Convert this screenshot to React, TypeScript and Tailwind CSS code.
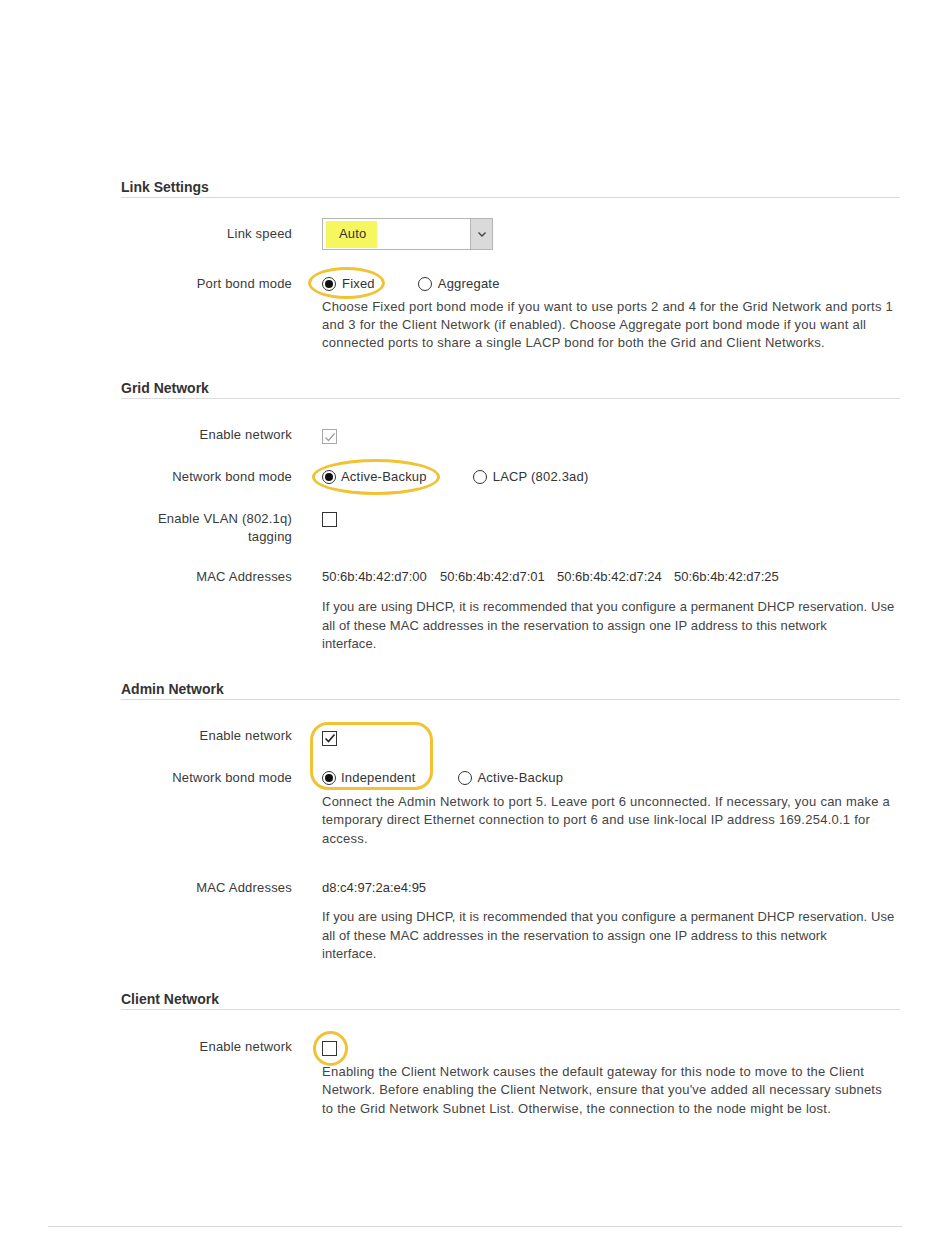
import React from "react";

const Radio = ({ checked }: { checked?: boolean }) => (
  <span className="relative inline-flex h-[14px] w-[14px] shrink-0 items-center justify-center rounded-full border border-[#333] bg-white">
    {checked && <span className="h-[8px] w-[8px] rounded-full bg-[#111]" />}
  </span>
);

const Checkbox = ({ checked, disabled }: { checked?: boolean; disabled?: boolean }) => (
  <span
    className={
      disabled
        ? "inline-flex h-[15px] w-[15px] shrink-0 items-center justify-center border border-[#a8a8a8] bg-white"
        : "inline-flex h-[15px] w-[15px] shrink-0 items-center justify-center border border-[#333] bg-white"
    }
  >
    {checked && (
      <svg width="12" height="12" viewBox="0 0 12 12">
        <path
          d="M1.5 6.5 L4.5 9.5 L10.5 2.5"
          fill="none"
          stroke={disabled ? "#9a9a9a" : "#222"}
          strokeWidth={disabled ? 1.2 : 1.6}
        />
      </svg>
    )}
  </span>
);

const Header = ({ children, mt }: { children: React.ReactNode; mt: string }) => (
  <div className={`${mt} border-b border-[#dcdcdc] pb-[2px] text-[14px] font-bold leading-[16px] text-[#333]`}>{children}</div>
);

const Label = ({ children }: { children: React.ReactNode }) => (
  <div className="w-[171px] shrink-0 text-right text-[13px] leading-[18px] tracking-[0.2px] text-[#3a3a3a]">{children}</div>
);

const Desc = ({
  lines,
  mt,
  leading = "leading-[18.5px]",
  tracking = "tracking-[0.25px]",
}: {
  lines: string[];
  mt: string;
  leading?: string;
  tracking?: string;
}) => (
  <div className={`${mt} ml-[201px] text-[13px] ${leading} ${tracking} text-[#444]`}>
    {lines.map((l, i) => (
      <div key={i} className="whitespace-nowrap">
        {l}
      </div>
    ))}
  </div>
);

const dhcp = [
  "If you are using DHCP, it is recommended that you configure a permanent DHCP reservation. Use",
  "all of these MAC addresses in the reservation to assign one IP address to this network",
  "interface.",
];

export default function App() {
  return (
    <div
      className="min-h-[1248px] w-[950px] bg-white pb-[19px] text-[#333]"
      style={{ fontFamily: '"Liberation Sans", Arial, sans-serif' }}
    >
      <div className="ml-[121px] w-[779px] pt-[179px]">
        {/* Link Settings */}
        <Header mt="mt-0">Link Settings</Header>

        <div className="mt-[20px] flex h-[32px] items-center">
          <Label>Link speed</Label>
          <div className="ml-[30px] flex h-[32px] w-[171px] items-stretch border border-[#b5b5b5] bg-white">
            <div className="flex flex-1 items-center pl-[3px]">
              <div className="flex h-[27px] w-[51px] items-center bg-[#f6f75e] pl-[13px] text-[13px] tracking-[0.2px] text-[#333]">Auto</div>
            </div>
            <div className="flex w-[22px] items-center justify-center border-l border-[#b5b5b5] bg-[#dadada]">
              <svg width="10" height="7" viewBox="0 0 10 7">
                <path d="M1.5 1.5 L5 5 L8.5 1.5" fill="none" stroke="#444" strokeWidth="1.4" />
              </svg>
            </div>
          </div>
        </div>

        <div className="mt-[25px] flex h-[18px] items-center">
          <Label>Port bond mode</Label>
          <div className="relative ml-[30px] flex items-center text-[13px] tracking-[0.2px] text-[#333]">
            <span className="pointer-events-none absolute left-[-14px] top-[-7px] h-[32px] w-[77px] rounded-[50%] border-[3px] border-[#f1c232]" />
            <Radio checked />
            <span className="ml-[6px]">Fixed</span>
            <span className="ml-[43px] flex">
              <Radio />
            </span>
            <span className="ml-[6px]">Aggregate</span>
          </div>
        </div>

        <Desc
          mt="mt-[5px]"
          leading="leading-[18px]"
          lines={[
            "Choose Fixed port bond mode if you want to use ports 2 and 4 for the Grid Network and ports 1",
            "and 3 for the Client Network (if enabled). Choose Aggregate port bond mode if you want all",
            "connected ports to share a single LACP bond for both the Grid and Client Networks.",
          ]}
        />

        {/* Grid Network */}
        <Header mt="mt-[28px]">Grid Network</Header>

        <div className="mt-[27px] flex h-[18px] items-start">
          <Label>Enable network</Label>
          <div className="ml-[30px] mt-[3px] flex">
            <Checkbox checked disabled />
          </div>
        </div>

        <div className="mt-[24px] flex h-[18px] items-center">
          <Label>Network bond mode</Label>
          <div className="relative ml-[30px] flex items-center text-[13px] tracking-[0.2px] text-[#333]">
            <span className="pointer-events-none absolute left-[-10px] top-[-8px] h-[36px] w-[128px] rounded-[50%] border-[3px] border-[#f1c232]" />
            <Radio checked />
            <span className="ml-[5px]">Active-Backup</span>
            <span className="ml-[46px] flex">
              <Radio />
            </span>
            <span className="ml-[6px]">LACP (802.3ad)</span>
          </div>
        </div>

        <div className="mt-[24px] flex items-start">
          <Label>
            Enable VLAN (802.1q)
            <br />
            tagging
          </Label>
          <div className="ml-[30px] mt-[2px] flex">
            <Checkbox />
          </div>
        </div>

        <div className="mt-[22px] flex h-[18px] items-center">
          <Label>MAC Addresses</Label>
          <div className="ml-[30px] flex text-[13px] text-[#333]">
            <span className="w-[118px]">50:6b:4b:42:d7:00</span>
            <span className="w-[117px]">50:6b:4b:42:d7:01</span>
            <span className="w-[117px]">50:6b:4b:42:d7:24</span>
            <span>50:6b:4b:42:d7:25</span>
          </div>
        </div>

        <Desc mt="mt-[12px]" tracking="tracking-[0.1px]" lines={dhcp} />

        {/* Admin Network */}
        <Header mt="mt-[27px]">Admin Network</Header>

        <div className="relative">
          <div className="mt-[27px] flex h-[18px] items-start">
            <Label>Enable network</Label>
            <div className="relative ml-[30px] mt-[4px] flex">
              <span className="pointer-events-none absolute left-[-12px] top-[-9px] h-[68px] w-[123px] rounded-[18px] border-[3px] border-[#f1c232]" />
              <Checkbox checked />
            </div>
          </div>

          <div className="mt-[24px] flex h-[18px] items-center">
            <Label>Network bond mode</Label>
            <div className="ml-[30px] flex items-center text-[13px] tracking-[0.2px] text-[#333]">
              <Radio checked />
              <span className="ml-[5px]">Independent</span>
              <span className="ml-[42px] flex">
                <Radio />
              </span>
              <span className="ml-[6px]">Active-Backup</span>
            </div>
          </div>
        </div>

        <Desc
          mt="mt-[6px]"
          lines={[
            "Connect the Admin Network to port 5. Leave port 6 unconnected. If necessary, you can make a",
            "temporary direct Ethernet connection to port 6 and use link-local IP address 169.254.0.1 for",
            "access.",
          ]}
        />

        <div className="mt-[31px] flex h-[18px] items-center">
          <Label>MAC Addresses</Label>
          <div className="ml-[30px] text-[13px] text-[#333]">d8:c4:97:2a:e4:95</div>
        </div>

        <Desc mt="mt-[11px]" tracking="tracking-[0.1px]" lines={dhcp} />

        {/* Client Network */}
        <Header mt="mt-[27px]">Client Network</Header>

        <div className="mt-[28px] flex h-[18px] items-start">
          <Label>Enable network</Label>
          <div className="relative ml-[30px] mt-[3px] flex">
            <span className="pointer-events-none absolute left-[-9px] top-[-10px] h-[35px] w-[35px] rounded-full border-[3px] border-[#f1c232]" />
            <Checkbox />
          </div>
        </div>

        <Desc
          mt="mt-[7px]"
          lines={[
            "Enabling the Client Network causes the default gateway for this node to move to the Client",
            "Network. Before enabling the Client Network, ensure that you've added all necessary subnets",
            "to the Grid Network Subnet List. Otherwise, the connection to the node might be lost.",
          ]}
        />
      </div>

      <div className="ml-[48px] mt-[108px] w-[854px] border-t border-[#d8d8d8]" />
    </div>
  );
}
